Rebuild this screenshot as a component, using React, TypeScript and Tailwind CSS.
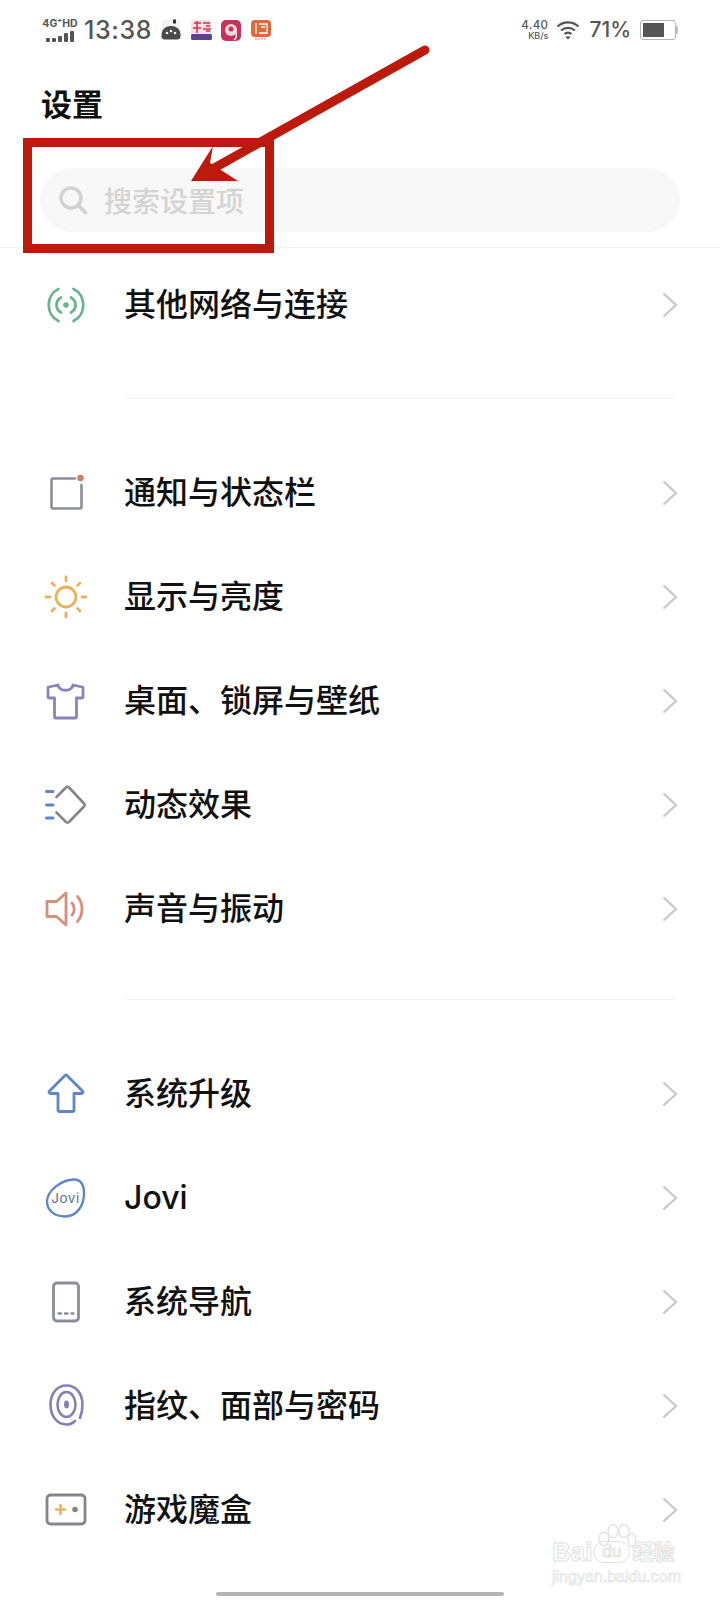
import type { ReactNode } from "react";

const CJK = "font-['Inter','Noto_Sans_CJK_SC',sans-serif]";

const Chevron = () => (
  <svg width="18" height="28" viewBox="0 0 18 28" fill="none" className="shrink-0">
    <path d="M2.500 2.500 15 14 2.500 25.500" stroke="#c8c8ca" strokeWidth="2.200" />
  </svg>
);

const Icon = ({ children }: { children: ReactNode }) => (
  <svg width="44" height="44" viewBox="0 0 44 44" fill="none" strokeLinecap="round" strokeLinejoin="round" className="shrink-0">
    {children}
  </svg>
);

const NetIcon = () => (
  <Icon>
    <g stroke="#67b68d" strokeWidth="2.800">
      <path d="M14.500 6C1.500 12 1.500 32 14.500 38" />
      <path d="M29.500 6C42.500 12 42.500 32 29.500 38" />
      <path d="M17 14.500C11 18 11 26 17 29.500" />
      <path d="M27 14.500C33 18 33 26 27 29.500" />
    </g>
    <circle cx="22" cy="22" r="2.800" fill="#67b68d" />
  </Icon>
);

const NotifyIcon = () => (
  <Icon>
    <path d="M31 7.500H9.500a2 2 0 0 0-2 2V36a1.500 1.500 0 0 0 1.500 1.500H36A1.500 1.500 0 0 0 37.500 36V14" stroke="#8b8d9a" strokeWidth="2.600" />
    <circle cx="36.500" cy="7" r="3.300" fill="#cf7a72" />
  </Icon>
);

const SunIcon = () => (
  <Icon>
    <circle cx="22" cy="22" r="10" stroke="#e8b35c" strokeWidth="2.800" />
    <g stroke="#e8b35c" strokeWidth="2.800">
      <path d="M22 2v4M22 38v4M2 22h4M38 22h4M8 8l2.500 2.500M33.500 33.500 36 36M8 36l2.500-2.500M33.500 10.500 36 8" />
    </g>
  </Icon>
);

const ShirtIcon = () => (
  <Icon>
    <path d="M14 6 5 8a1 1 0 0 0-1 1v9a1 1 0 0 0 1 1h5.500v18.500a1.500 1.500 0 0 0 1.500 1.500h19a1.500 1.500 0 0 0 1.500-1.500V19H38a1 1 0 0 0 1-1V9a1 1 0 0 0-1-1l-9-2c-1.500 7-13.500 7-15 0Z" stroke="#8a84ba" strokeWidth="2.800" />
  </Icon>
);

const MotionIcon = () => (
  <Icon>
    <path d="M12.500 14 22 4.500a2 2 0 0 1 3 0L40 20.500a2 2 0 0 1 0 3L25 39a2 2 0 0 1-3 0l-9.500-9.500" stroke="#85858d" strokeWidth="2.600" />
    <path d="M2.500 8.500h6.500M2.500 22h6.500M2.500 35h6.500" stroke="#5f86c6" strokeWidth="3" />
  </Icon>
);

const SoundIcon = () => (
  <Icon>
    <path d="M3 14.500h9.500L22 6v32l-9.500-8.500H3Z" stroke="#d68f7e" strokeWidth="2.800" />
    <path d="M28 16c3 3.500 3 8.500 0 12M33.500 9.500c6 7 6 18 0 25" stroke="#d68f7e" strokeWidth="2.800" />
  </Icon>
);

const UpIcon = () => (
  <Icon>
    <path d="M21 3.500a1.500 1.500 0 0 1 2 0L38.500 19c1 1 .5 2.500-1 2.500H30V38a1.500 1.500 0 0 1-1.500 1.500h-13A1.500 1.500 0 0 1 14 38V21.500H6.500c-1.500 0-2-1.500-1-2.500Z" stroke="#5f86c6" strokeWidth="2.800" />
  </Icon>
);

const JoviIcon = () => (
  <Icon>
    <path d="M30 3.500c7 0 10 6 10 14 0 13-8 23-19 23-10 0-18-6-18-15 0-11 15-22 27-22Z" stroke="#5f86c6" strokeWidth="2.400" />
    <text x="21.500" y="27" textAnchor="middle" fontSize="13.500" letterSpacing="0.5" fontFamily="Inter, sans-serif" fill="#5a6f96">Jovi</text>
  </Icon>
);

const PhoneIcon = () => (
  <Icon>
    <rect x="9.500" y="3" width="25" height="38" rx="3.500" stroke="#8b8d9a" strokeWidth="2.800" />
    <path d="M14.500 33.500h2.500M21 33.500h2.500M27.500 33.500h2" stroke="#8b8d9a" strokeWidth="2.400" />
  </Icon>
);

const FingerIcon = () => (
  <Icon>
    <path d="M31 37c-2.500 2.500-5 3.500-8.500 3.500C13 40.500 6.500 32 6.500 20.500 6.500 9.500 13 1.500 22.500 1.500S38.500 9.500 38.500 20.500c0 5-1 9.500-2.500 13.500" stroke="#8480b8" strokeWidth="2.600" />
    <ellipse cx="22.500" cy="20.500" rx="9" ry="12.500" stroke="#8480b8" strokeWidth="2.600" />
    <ellipse cx="22.500" cy="20.500" rx="2.500" ry="4" fill="#8480b8" />
  </Icon>
);

const GameIcon = () => (
  <Icon>
    <rect x="3" y="7" width="38" height="29" rx="3.500" stroke="#85858d" strokeWidth="2.800" />
    <path d="M12 21.500h9M16.500 17v9" stroke="#e8b35c" strokeWidth="2.600" />
    <circle cx="31" cy="21.500" r="2.800" fill="#85858d" />
  </Icon>
);

function Row({ icon, label }: { icon: ReactNode; label: string }) {
  return (
    <div className="flex h-[104px] items-center pr-[41px] pl-[44px]">
      {icon}
      <span className="ml-[36px] flex-1 text-[32px] font-medium text-[#111] leading-none">
        {label}
      </span>
      <Chevron />
    </div>
  );
}

function StatusBar() {
  return (
    <div className="flex h-[56px] items-start justify-between pr-[42px] pl-[42px] pt-[16px] font-['Inter',sans-serif] text-[#555]">
      <div className="flex items-center">
        <div className="flex w-[36px] flex-col items-center">
          <span className="text-[10.500px] leading-[11px] font-bold text-[#555]">
            4G⁺HD
          </span>
          <div className="mt-[2px] flex items-end gap-[2px]">
            <span className="h-[4px] w-[4px] rounded-[1px] bg-[#555]" />
            <span className="h-[4px] w-[4px] rounded-[1px] bg-[#555]" />
            <span className="h-[6px] w-[4px] rounded-[1px] bg-[#555]" />
            <span className="h-[9px] w-[4px] rounded-[1px] bg-[#555]" />
            <span className="h-[11px] w-[4px] rounded-[1px] bg-[#555]" />
          </div>
        </div>
        <span className="ml-[6px] text-[25px] leading-[28px] font-medium tracking-[0.6px] text-[#555]">
          13:38
        </span>
        <svg width="20" height="22" viewBox="0 0 20 22" className="ml-[9px]">
          <rect x="0.500" y="0.500" width="19" height="20" rx="4" fill="#f2f2f2" />
          <path d="M0.500 16C.5 10 5 7 10 7s9.500 3 9.500 9v1a3.500 3.500 0 0 1-3.500 3.500H4A3.500 3.500 0 0 1 .5 17Z" fill="#4a4a4a" />
          <rect x="12" y="0.500" width="3" height="4" fill="#333" />
          <circle cx="6" cy="14" r="1.300" fill="#eee" />
          <circle cx="10" cy="12" r="1.300" fill="#eee" />
          <circle cx="14" cy="14" r="1.300" fill="#eee" />
        </svg>
        <svg width="21" height="20" viewBox="0 0 21 20" className="ml-[10px]">
          <rect width="21" height="20" rx="3" fill="#f7dfe4" />
          <path d="M3 3h7M6 1v12M2 8h8M12 3h7M15 6h4M12 9h8M15 11h4" stroke="#d2334f" strokeWidth="1.500" fill="none" />
          <rect y="14" width="21" height="6" rx="1.500" fill="#5b3f9a" />
        </svg>
        <svg width="20" height="21" viewBox="0 0 20 21" className="ml-[9px]">
          <rect width="20" height="21" rx="5" fill="#c9305a" />
          <circle cx="10" cy="10" r="6" fill="#f6d9df" />
          <circle cx="10" cy="9" r="2.500" fill="#c9305a" />
          <path d="M13 20c3-2 3-6 1-9" stroke="#fff" strokeWidth="1.500" fill="none" />
        </svg>
        <svg width="20" height="20" viewBox="0 0 20 20" className="ml-[10px]">
          <rect width="20" height="17" rx="4" fill="#e2683a" />
          <path d="M5 3v11M8 4h8v9H8M10 7h4" stroke="#fff" strokeWidth="1.300" fill="none" />
          <path d="M4 19h12" stroke="#d98a66" strokeWidth="1.200" strokeDasharray="2 1" />
        </svg>
      </div>
      <div className="flex items-center">
        <div className="flex flex-col items-end text-[#555]">
          <span className="text-[11.500px] leading-[11px] font-medium tracking-[0.4px]">4.40</span>
          <span className="text-[9px] leading-[10px] font-medium">KB/s</span>
        </div>
        <svg width="24" height="20" viewBox="0 0 24 20" fill="none" className="ml-[8px]">
          <path d="M1.500 6.500C7.500 1 16.500 1 22.500 6.500M5 10.500c4-3.500 10-3.500 14 0M8.500 14c2-1.500 5-1.500 7 0" stroke="#555" strokeWidth="2.200" />
          <path d="M12 19.500 9.500 17c1.500-1 3.500-1 5 0Z" fill="#555" />
        </svg>
        <span className="ml-[9px] text-[21px] leading-[28px] font-medium text-[#555]">71%</span>
        <div className="ml-[9px] flex items-center">
          <div className="h-[20px] w-[36px] rounded-[3px] border-[1.500px] border-[#b4b4b4] p-[2px]">
            <div className="h-full w-[69%] bg-[#555]" />
          </div>
          <div className="h-[8px] w-[2px] rounded-r-[1px] bg-[#c4c4c4]" />
        </div>
      </div>
    </div>
  );
}

function Watermark() {
  return (
    <div className="absolute top-[1539px] left-[552px] w-[132px]">
      <svg width="40" height="40" viewBox="0 0 40 40" fill="none" stroke="#e4e4e4" strokeWidth="1.500" className="absolute -top-[15px] left-[44px]">
        <ellipse cx="8" cy="15" rx="5" ry="7" />
        <ellipse cx="17" cy="7" rx="5" ry="6.500" />
        <ellipse cx="28" cy="7" rx="5" ry="6.500" />
        <ellipse cx="36" cy="16" rx="4" ry="6.500" />
      </svg>
      <div className="flex items-center font-['Liberation_Sans','Noto_Sans_CJK_SC',sans-serif] text-[26px] leading-[26px] font-bold text-transparent [-webkit-text-stroke:1px_#e2e2e2]">
        <span>Bai</span>
        <span className="ml-[1px] flex h-[22px] w-[37px] items-center justify-center rounded-[11px] border border-[#e2e2e2] text-[17px] font-normal">du</span>
        <span className="ml-[2px] whitespace-nowrap text-[21px]">经验</span>
      </div>
      <div className="mt-[3px] whitespace-nowrap font-['Liberation_Sans',sans-serif] text-[16px] leading-[18px] text-transparent [-webkit-text-stroke:0.7px_#e2e2e2]">
        jingyan.baidu.com
      </div>
    </div>
  );
}

function Annotation() {
  return (
    <svg width="720" height="270" viewBox="0 0 720 270" fill="none" className="absolute top-0 left-0">
      <rect x="27.500" y="142.500" width="242" height="106" stroke="#bb1a0c" strokeWidth="9" />
      <path d="M425 50 200 176" stroke="#bb1a0c" strokeWidth="9" strokeLinecap="round" />
      <path d="M191 181 213 146 210 163 238 181Z" fill="#bb1a0c" />
    </svg>
  );
}

export default function App() {
  return (
    <div className={`relative h-[1600px] w-[720px] overflow-hidden bg-white ${CJK}`}>
      <StatusBar />

      <h1 className="mt-[32px] pl-[41px] text-[31px] leading-[34px] font-bold text-[#111]">设置</h1>

      <div className="mt-[46px] px-[40px]">
        <div className="flex h-[64px] items-center rounded-full bg-[#f8f8f8] pl-[18px]">
          <svg width="30" height="30" viewBox="0 0 30 30" fill="none">
            <circle cx="13" cy="13" r="10" stroke="#d2d2d2" strokeWidth="3.400" />
            <path d="M21 21 27.500 27.500" stroke="#d2d2d2" strokeWidth="3.800" strokeLinecap="round" />
          </svg>
          <span className="ml-[16px] pt-[3px] text-[28px] leading-none font-medium text-[#d4d4d4]">搜索设置项</span>
        </div>
      </div>

      <div className="mt-[15px] h-px bg-[#f3f3f3]" />

      <div className="pt-[5px]">
        <Row icon={<NetIcon />} label="其他网络与连接" />
      </div>

      <div className="mt-[41px] mr-[46px] ml-[125px] h-px bg-[#f3f3f3]" />

      <div className="mt-[42px]">
        <Row icon={<NotifyIcon />} label="通知与状态栏" />
        <Row icon={<SunIcon />} label="显示与亮度" />
        <Row icon={<ShirtIcon />} label="桌面、锁屏与壁纸" />
        <Row icon={<MotionIcon />} label="动态效果" />
        <Row icon={<SoundIcon />} label="声音与振动" />
      </div>

      <div className="mt-[38px] mr-[46px] ml-[125px] h-px bg-[#f3f3f3]" />

      <div className="mt-[42px]">
        <Row icon={<UpIcon />} label="系统升级" />
        <Row icon={<JoviIcon />} label="Jovi" />
        <Row icon={<PhoneIcon />} label="系统导航" />
        <Row icon={<FingerIcon />} label="指纹、面部与密码" />
        <Row icon={<GameIcon />} label="游戏魔盒" />
      </div>

      <div className="absolute bottom-[4px] left-[216px] h-[4px] w-[288px] rounded-full bg-[#b4b4b4]" />
      <Annotation />
      <Watermark />
    </div>
  );
}
